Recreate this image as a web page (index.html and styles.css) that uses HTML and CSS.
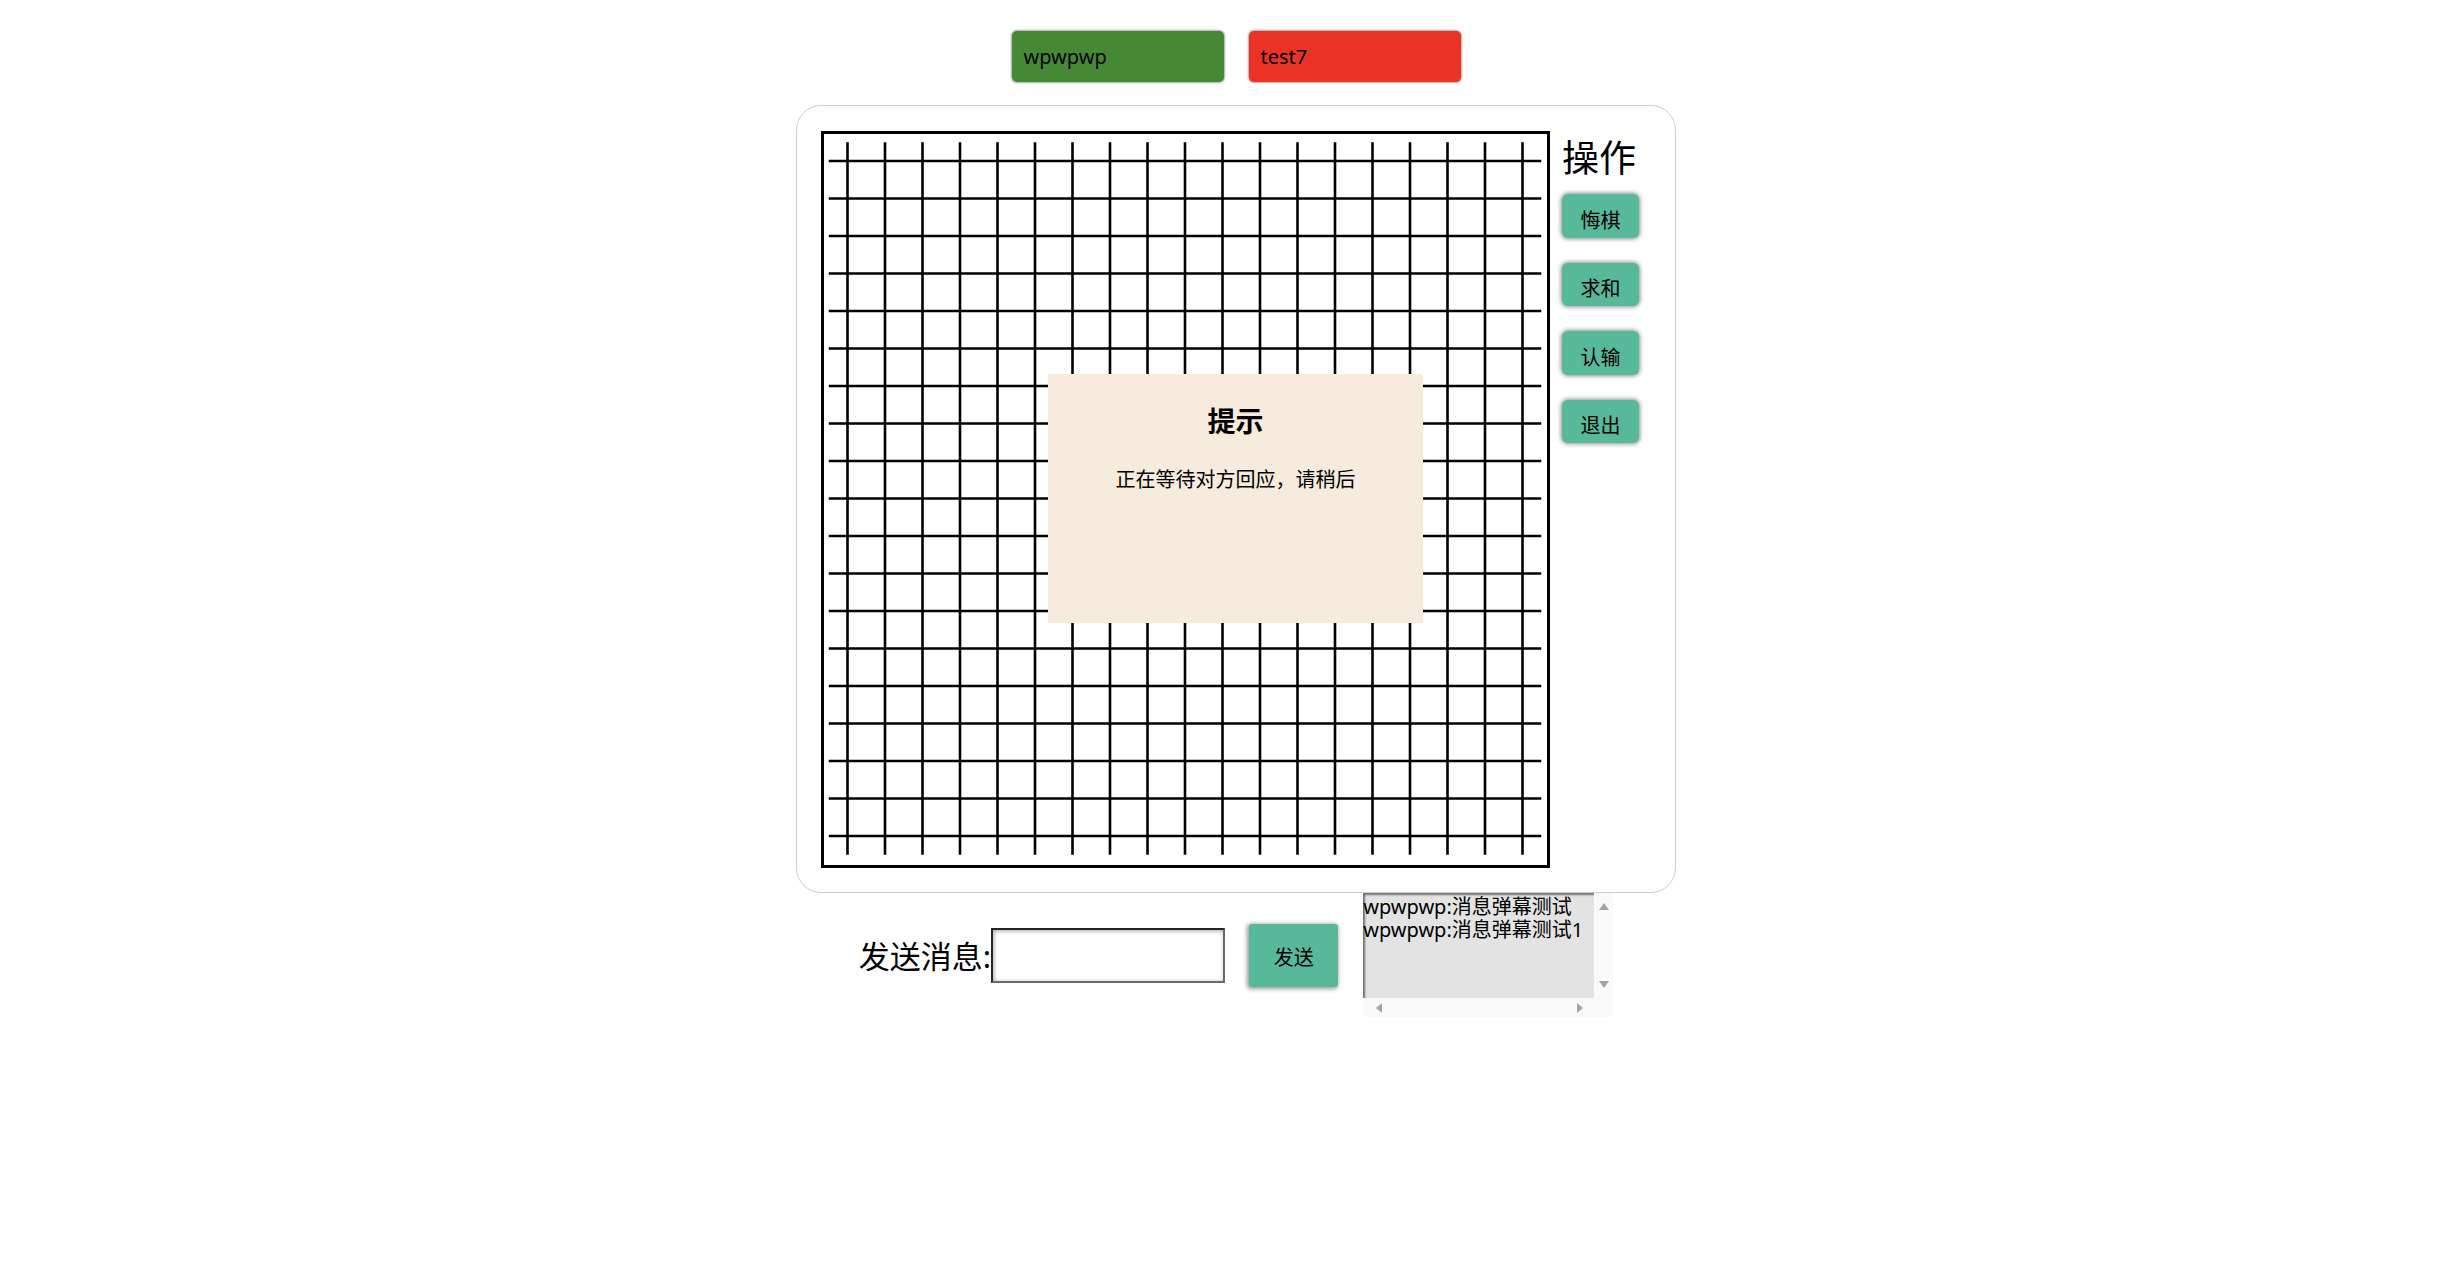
FILE: index.html
```html
<!DOCTYPE html>
<html lang="zh-CN">
<head>
<meta charset="utf-8">
<title>对局</title>
<link rel="stylesheet" href="styles.css">
</head>
<body>
<div class="page">
  <div class="players">
    <div class="player player-me">wpwpwp</div>
    <div class="player player-opp">test7</div>
  </div>

  <div class="table">
    <div class="board">
      <svg class="grid" width="723" height="731" viewBox="0 0 723 731">
        <path fill="none" stroke="#000" stroke-width="2.6" d="M23.5 8.25V720.75M61 8.25V720.75M98.5 8.25V720.75M136 8.25V720.75M173.5 8.25V720.75M211 8.25V720.75M248.5 8.25V720.75M286 8.25V720.75M323.5 8.25V720.75M361 8.25V720.75M398.5 8.25V720.75M436 8.25V720.75M473.5 8.25V720.75M511 8.25V720.75M548.5 8.25V720.75M586 8.25V720.75M623.5 8.25V720.75M661 8.25V720.75M698.5 8.25V720.75M4.75 27H717.25M4.75 64.5H717.25M4.75 102H717.25M4.75 139.5H717.25M4.75 177H717.25M4.75 214.5H717.25M4.75 252H717.25M4.75 289.5H717.25M4.75 327H717.25M4.75 364.5H717.25M4.75 402H717.25M4.75 439.5H717.25M4.75 477H717.25M4.75 514.5H717.25M4.75 552H717.25M4.75 589.5H717.25M4.75 627H717.25M4.75 664.5H717.25M4.75 702H717.25"/>
      </svg>
    </div>

    <div class="ops">
      <div class="ops-title">操作</div>
      <button class="op-btn">悔棋</button>
      <button class="op-btn">求和</button>
      <button class="op-btn">认输</button>
      <button class="op-btn">退出</button>
    </div>

    <div class="dialog">
      <div class="dialog-title">提示</div>
      <div class="dialog-text">正在等待对方回应，请稍后</div>
    </div>
  </div>

  <div class="chatbar">
    <label class="chat-label" for="msg">发送消息:</label>
    <input class="chat-input" id="msg" type="text">
    <button class="send-btn">发送</button>
    <div class="chat">
      <div class="chat-text">wpwpwp:消息弹幕测试<br>wpwpwp:消息弹幕测试1</div>
      <div class="vbar"><span class="tri tri-up"></span><span class="tri tri-down"></span></div>
      <div class="hbar"><span class="tri tri-left"></span><span class="tri tri-right"></span></div>
      <div class="corner"></div>
    </div>
  </div>
</div>
</body>
</html>
```
FILE: styles.css
```css
* { box-sizing: border-box; }

html, body {
  margin: 0;
  padding: 0;
  background: #fff;
}

body {
  font-family: "Noto Sans", "Noto Sans CJK SC", sans-serif;
  color: #000;
}

.page {
  display: flex;
  flex-direction: column;
  align-items: center;
  padding-top: 31px;
  padding-left: 11px;
}

/* players */
.players {
  display: flex;
  gap: 25px;
}

.player {
  width: 212px;
  height: 51px;
  border-radius: 5px;
  display: flex;
  align-items: center;
  padding: 1px 12px 0;
  font-size: 20px;
  line-height: 20px;
  box-shadow: 0 0 2px 1px rgba(0, 0, 0, 0.35);
}

.player-me { background: #468934; }
.player-opp { background: #ea3324; }

/* table */
.table {
  position: relative;
  margin-top: 23px;
  width: 880px;
  height: 788px;
  border: 1px solid #cfcfcf;
  border-radius: 25px;
  padding: 25px 24px 24px 24px;
  display: flex;
  align-items: flex-start;
}

.board {
  width: 729px;
  height: 737px;
  border: 3px solid #000;
  flex: none;
  background: #fff;
}

.grid { display: block; }

.ops {
  margin-left: 12px;
  padding-top: 7px;
  display: flex;
  flex-direction: column;
  align-items: flex-start;
}

.ops-title {
  font-family: "Noto Sans CJK SC", sans-serif;
  font-size: 37px;
  line-height: 37px;
  margin-bottom: 19px;
}

.op-btn {
  width: 77px;
  height: 43.5px;
  margin: 0 0 25px 0;
  border: none;
  border-radius: 6px;
  background: #58b99a;
  box-shadow: 0 0 4px 1px rgba(0, 0, 0, 0.45);
  font-family: "Noto Sans CJK SC", sans-serif;
  font-size: 20px;
  line-height: 20px;
  padding: 8px 0 0;
  color: #000;
}

.dialog {
  position: absolute;
  left: 251px;
  top: 268px;
  width: 375px;
  height: 249px;
  background: #f6ebdc;
  text-align: center;
  font-family: "Noto Sans CJK SC", sans-serif;
}

.dialog-title {
  margin-top: 32px;
  font-size: 28px;
  line-height: 28px;
  font-weight: 700;
}

.dialog-text {
  margin-top: 35px;
  font-size: 20px;
  line-height: 20px;
}

/* chat bar */
.chatbar {
  display: flex;
  align-items: center;
  height: 124px;
}

.chat-label {
  font-size: 31px;
  line-height: 31px;
  padding-top: 2px;
}

.chat-input {
  width: 234px;
  height: 55px;
  margin: 0;
  border: 2px solid;
  border-color: #262626 #6a6a6a #6a6a6a #262626;
  box-shadow: inset 1px 1px 4px rgba(0, 0, 0, 0.35);
  background: #fff;
  font-size: 20px;
  padding: 0 4px;
  outline: none;
}

.send-btn {
  width: 89px;
  height: 63px;
  margin-left: 24px;
  border: none;
  border-radius: 3px;
  background: #58b99a;
  box-shadow: -1px 1px 4px 1px rgba(0, 0, 0, 0.4);
  font-family: "Noto Sans CJK SC", sans-serif;
  font-size: 20px;
  line-height: 20px;
  padding: 3px 0 0;
  color: #000;
}

.chat {
  margin-left: 25px;
  width: 250px;
  height: 124px;
  display: grid;
  grid-template-columns: 231px 19px;
  grid-template-rows: 105px 19px;
  background: #fafafa;
}

.chat-text {
  background: #e3e3e3;
  box-shadow: inset 2px 2px 2px rgba(0, 0, 0, 0.5);
  font-size: 20px;
  line-height: 23px;
  padding-top: 2px;
  white-space: nowrap;
  overflow: hidden;
}

.vbar {
  display: flex;
  flex-direction: column;
  justify-content: space-between;
  align-items: center;
  padding: 10px 0 10px;
}

.hbar {
  display: flex;
  justify-content: space-between;
  align-items: center;
  padding: 0 11px 0 13px;
}

.tri {
  width: 0;
  height: 0;
  border-style: solid;
  border-color: transparent;
}

.tri-up {
  border-width: 0 5px 7px;
  border-bottom-color: #a3a3a3;
}

.tri-down {
  border-width: 7px 5px 0;
  border-top-color: #a3a3a3;
}

.tri-left {
  border-width: 5px 6px 5px 0;
  border-right-color: #a3a3a3;
}

.tri-right {
  border-width: 5px 0 5px 6px;
  border-left-color: #a3a3a3;
}
```
